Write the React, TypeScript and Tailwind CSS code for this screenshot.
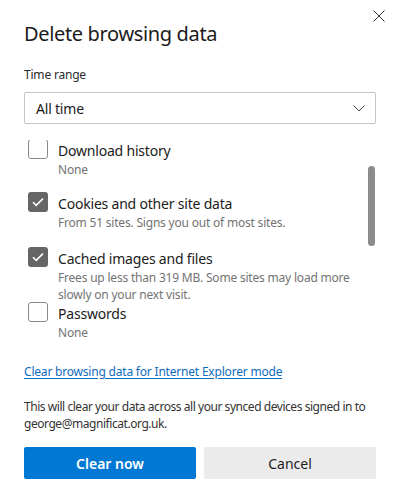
import { useState } from "react";

const font = { fontFamily: '"Noto Sans", "Open Sans", sans-serif' };

type Item = { label: string; sub: string[]; checked: boolean; mt: string };

const items: Item[] = [
  { label: "Download history", sub: ["None"], checked: false, mt: "mt-0" },
  { label: "Cookies and other site data", sub: ["From 51 sites. Signs you out of most sites."], checked: true, mt: "mt-[14px]" },
  { label: "Cached images and files", sub: ["Frees up less than 319 MB. Some sites may load more", "slowly on your next visit."], checked: true, mt: "mt-[16px]" },
  { label: "Passwords", sub: ["None"], checked: false, mt: "-mt-[1px]" },
];

function Checkbox({ checked }: { checked: boolean }) {
  if (checked) {
    return (
      <div className="w-5 h-5 rounded-[3px] bg-[#666666] flex items-center justify-center shrink-0">
        <svg width="12" height="10" viewBox="0 0 12 10" fill="none">
          <path d="M1 5.2 L4.2 8.4 L11 1.6" stroke="white" strokeWidth="1.6" />
        </svg>
      </div>
    );
  }
  return <div className="w-5 h-5 rounded-[3px] border border-[#8a8a8a] bg-white shrink-0" />;
}

export default function App() {
  const [state, setState] = useState(items.map(i => i.checked));

  return (
    <div className="w-[397px] h-[502px] bg-white text-[#1b1b1b] relative" style={font}>
      <button className="absolute right-[12px] top-[10px] w-[12px] h-[12px]">
        <svg width="12" height="12" viewBox="0 0 12 12">
          <path d="M0.5 0.5 L11.5 11.5 M11.5 0.5 L0.5 11.5" stroke="#333" strokeWidth="1" />
        </svg>
      </button>

      <div className="pl-6 pr-[21px] pt-[21px]">
        <h1 className="text-[20px] leading-[26px] font-normal tracking-[-0.35px]">Delete browsing data</h1>

        <div className="mt-[20px] text-[12px] leading-[16px] text-[#2b2b2b] tracking-[-0.2px]">Time range</div>

        <div className="mt-[9px] h-[32px] border border-[#c6c6c6] rounded-[2px] flex items-center justify-between pl-[11px] pr-[10px]">
          <span className="text-[14px] text-[#1b1b1b] tracking-[-0.2px]">All time</span>
          <svg width="12" height="7" viewBox="0 0 12 7" fill="none">
            <path d="M0.5 0.5 L6 6 L11.5 0.5" stroke="#444" strokeWidth="1" />
          </svg>
        </div>
      </div>

      <div className="relative mt-[16px] h-[205px] overflow-hidden">
        <div className="-mt-[1px] pl-[28px] pr-6">
          {items.map((it, i) => (
            <div key={it.label} className={`flex gap-[10px] ${it.mt}`} onClick={() => setState(s => s.map((v, j) => (j === i ? !v : v)))}>
              <Checkbox checked={state[i]} />
              <div className="pt-[2px]">
                <div className="text-[14px] leading-[20px] text-[#1b1b1b] tracking-[-0.2px]">{it.label}</div>
                {it.sub.map(s => (
                  <div key={s} className="text-[12px] leading-[17px] text-[#737373] tracking-[-0.2px]">{s}</div>
                ))}
              </div>
            </div>
          ))}
        </div>
        <div className="absolute left-[368px] top-[26px] w-[7px] h-[80px] rounded-full bg-[#8c8c8c]" />
      </div>

      <div className="pl-6 pr-[21px]">
        <a href="#" className="block mt-[18px] text-[12px] leading-[17px] text-[#0f6cbd] underline underline-offset-2 tracking-[-0.2px]">
          Clear browsing data for Internet Explorer mode
        </a>

        <p className="mt-[18px] text-[12px] leading-[17px] text-[#333333] tracking-[-0.45px]">
          This will clear your data across all your synced devices signed in to george@magnificat.org.uk.
        </p>

        <div className="mt-[15px] grid grid-cols-2 gap-2">
          <button className="h-[32px] bg-[#0078d4] text-white text-[14px] font-semibold rounded-[2px]">Clear now</button>
          <button className="h-[32px] bg-[#ebebeb] text-[#1b1b1b] text-[14px] rounded-[2px]">Cancel</button>
        </div>
      </div>
    </div>
  );
}
